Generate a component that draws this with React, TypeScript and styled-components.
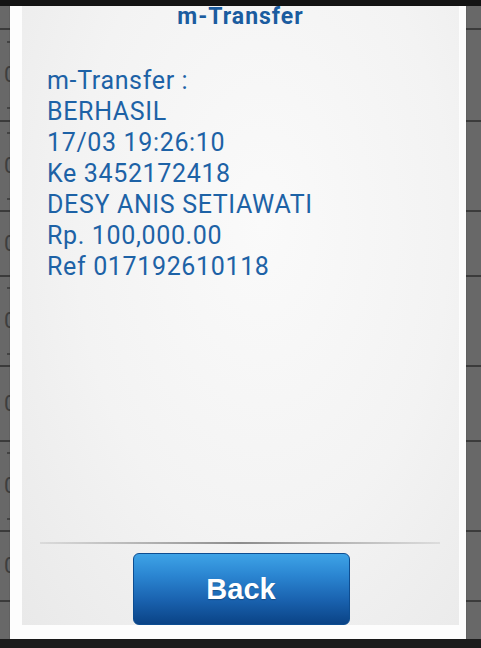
import styled, { createGlobalStyle } from 'styled-components';

const GlobalStyle = createGlobalStyle`
  html, body {
    margin: 0;
    padding: 0;
    background: #141414;
  }
  * {
    box-sizing: border-box;
  }
`;

const Screen = styled.div`
  position: relative;
  width: 481px;
  height: 648px;
  display: flex;
  flex-direction: column;
  overflow: hidden;
  font-family: Roboto, 'Noto Sans', sans-serif;
`;

const TopBar = styled.div`
  height: 6px;
  background: #141414;
`;

const BottomBar = styled.div`
  height: 9px;
  background: #1c1c1c;
`;

const Backdrop = styled.div`
  flex: 1;
  display: flex;
  flex-direction: column;
  background: #686868;
`;

const BackRow = styled.div<{ $h: number }>`
  height: ${(p) => p.$h}px;
  border-bottom: 2px solid #3b3b3b;
  display: flex;
  flex-direction: column;
  justify-content: space-around;
  padding-left: 4px;
  color: #3e3e3e;
  font-size: 22px;
  line-height: 22px;
`;

const Tick = styled.span`
  display: block;
  width: 3px;
  height: 2px;
  margin-left: 3px;
  background: #444;
`;

const Dialog = styled.div`
  position: absolute;
  left: 10px;
  top: 6px;
  width: 456px;
  height: 633px;
  background: #fdfdfd;
  padding: 0 7px 14px 12px;
  box-shadow: 0 0 1px rgba(0, 0, 0, 0.4);
`;

const Panel = styled.div`
  height: 100%;
  display: flex;
  flex-direction: column;
  background: radial-gradient(ellipse at 55% 35%, #fafafa 0%, #f3f3f3 55%, #e9e9e9 100%);
`;

const Title = styled.h1`
  margin: 0;
  text-align: center;
  font-size: 23px;
  line-height: 21px;
  font-weight: 700;
  letter-spacing: 1px;
  color: #1b5c9f;
`;

const Message = styled.div`
  margin-top: 38px;
  padding-left: 25px;
  color: #1d62a6;
  font-size: 25px;
  line-height: 31px;
  letter-spacing: 0.65px;
`;

const Line = styled.div`
  white-space: nowrap;
`;

const Spacer = styled.div`
  flex: 1;
`;

const Separator = styled.div`
  height: 2px;
  margin: 0 19px 9px 18px;
  background: linear-gradient(90deg, rgba(150, 150, 150, 0.2), #8c8c8c 50%, rgba(150, 150, 150, 0.2));
`;

const BackButton = styled.button`
  align-self: center;
  width: 217px;
  height: 72px;
  margin-left: 1px;
  border: 1px solid #0d4d91;
  border-radius: 6px;
  background: linear-gradient(180deg, #3ea3e6 0%, #2b86d2 30%, #1a63b0 65%, #0a4386 100%);
  color: #ffffff;
  font-family: 'Liberation Sans', Arial, sans-serif;
  font-weight: 700;
  font-size: 29px;
  text-shadow: 0 1px 1px rgba(0, 0, 0, 0.25);
  cursor: pointer;
`;

const rows = [
  { h: 24, t: false },
  { h: 92, t: true },
  { h: 90, t: true },
  { h: 65, t: false },
  { h: 90, t: true },
  { h: 75, t: false },
  { h: 90, t: true },
  { h: 70, t: false },
];

const lines = [
  'm-Transfer :',
  'BERHASIL',
  '17/03 19:26:10',
  'Ke 3452172418',
  'DESY ANIS SETIAWATI',
  'Rp. 100,000.00',
  'Ref 017192610118',
];

export default function App() {
  return (
    <>
      <GlobalStyle />
      <Screen>
        <TopBar />
        <Backdrop>
          {rows.map((r, i) => (
            <BackRow key={i} $h={r.h}>
              {r.t && <Tick />}
              {r.h > 60 && <span>0</span>}
              {r.t && <Tick />}
            </BackRow>
          ))}
        </Backdrop>
        <BottomBar />
        <Dialog>
          <Panel>
            <Title>m-Transfer</Title>
            <Message>
              {lines.map((l) => (
                <Line key={l}>{l}</Line>
              ))}
            </Message>
            <Spacer />
            <Separator />
            <BackButton>Back</BackButton>
          </Panel>
        </Dialog>
      </Screen>
    </>
  );
}
